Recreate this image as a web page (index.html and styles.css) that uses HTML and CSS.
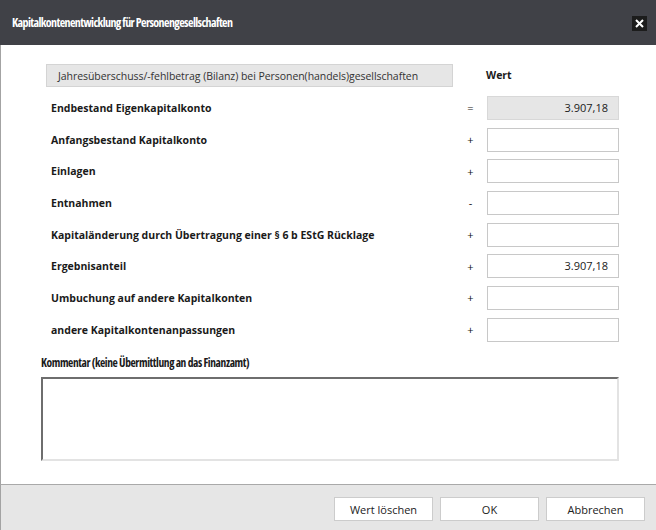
FILE: index.html
```html
<!DOCTYPE html>
<html lang="de">
<head>
<meta charset="utf-8">
<title>Kapitalkontenentwicklung</title>
<link rel="stylesheet" href="styles.css">
</head>
<body>
<div class="dialog">
  <div class="titlebar">
    <span class="title">Kapitalkontenentwicklung für Personengesellschaften</span>
    <span class="close"><svg width="9" height="9" viewBox="0 0 9 9"><path d="M1 1 L8 8 M8 1 L1 8" stroke="#fff" stroke-width="2" fill="none"/></svg></span>
  </div>
  <div class="content">
    <div class="grid">
      <div class="headbox">Jahresüberschuss/-fehlbetrag (Bilanz) bei Personen(handels)gesellschaften</div>
      <div class="sign head"></div>
      <div class="wert">Wert</div>

      <div class="label">Endbestand Eigenkapitalkonto</div>
      <div class="sign">=</div>
      <div class="cell"><div class="input readonly">3.907,18</div></div>

      <div class="label">Anfangsbestand Kapitalkonto</div>
      <div class="sign">+</div>
      <div class="cell"><div class="input"></div></div>

      <div class="label">Einlagen</div>
      <div class="sign">+</div>
      <div class="cell"><div class="input"></div></div>

      <div class="label">Entnahmen</div>
      <div class="sign">-</div>
      <div class="cell"><div class="input"></div></div>

      <div class="label">Kapitaländerung durch Übertragung einer § 6 b EStG Rücklage</div>
      <div class="sign">+</div>
      <div class="cell"><div class="input"></div></div>

      <div class="label">Ergebnisanteil</div>
      <div class="sign">+</div>
      <div class="cell"><div class="input">3.907,18</div></div>

      <div class="label">Umbuchung auf andere Kapitalkonten</div>
      <div class="sign">+</div>
      <div class="cell"><div class="input"></div></div>

      <div class="label">andere Kapitalkontenanpassungen</div>
      <div class="sign">+</div>
      <div class="cell"><div class="input"></div></div>
    </div>
    <div class="comment-label">Kommentar (keine Übermittlung an das Finanzamt)</div>
    <div class="textarea"></div>
  </div>
  <div class="footer">
    <div class="btn">Wert löschen</div>
    <div class="btn">OK</div>
    <div class="btn">Abbrechen</div>
  </div>
</div>
</body>
</html>
```
FILE: styles.css
```css
html, body {
  margin: 0;
  padding: 0;
  background: #ffffff;
}
body {
  font-family: "Open Sans", "Noto Sans", sans-serif;
  font-size: 10.5px;
  color: #1a1a1a;
}
.dialog {
  width: 656px;
  height: 530px;
  display: flex;
  flex-direction: column;
  overflow: hidden;
}
.titlebar {
  height: 45px;
  flex: none;
  background: #404147;
  display: flex;
  align-items: center;
  justify-content: space-between;
  padding: 0 9px 0 12px;
  box-sizing: border-box;
}
.title {
  color: #ffffff;
  font-family: "Open Sans", sans-serif;
  font-weight: 700;
  font-stretch: 75%;
  font-size: 12px;
  letter-spacing: -0.6px;
}
.close {
  width: 15px;
  height: 15px;
  background: #1c1c1c;
  display: flex;
  align-items: center;
  justify-content: center;
  margin-top: 2px;
}
.content {
  flex: 1;
  border-left: 1px solid #a3a3a3;
  padding: 19px 0 0 40px;
  display: flex;
  flex-direction: column;
}
.grid {
  margin-left: 5px;
  display: grid;
  grid-template-columns: 407px 34px 132px;
  grid-template-rows: 28px repeat(8, 31.7px);
  align-items: center;
}
.headbox {
  align-self: start;
  height: 23px;
  box-sizing: border-box;
  background: #e6e6e6;
  border: 1px solid #d4d4d4;
  padding-left: 11px;
  display: flex;
  align-items: center;
  color: #333;
  letter-spacing: -0.05px;
}
.sign.head {
  align-self: start;
}
.wert {
  align-self: start;
  height: 23px;
  line-height: 23px;
  font-weight: bold;
  margin-left: -1px;
}
.label {
  font-weight: bold;
  padding-left: 5px;
  white-space: nowrap;
}
.sign {
  text-align: center;
  padding-left: 1px;
  font-size: 11px;
  color: #111;
}
.cell {
  display: flex;
  align-items: center;
}
.input {
  width: 132px;
  height: 24px;
  box-sizing: border-box;
  border: 1px solid #c8c8c8;
  background: #fff;
  text-align: right;
  padding-right: 10px;
  line-height: 22px;
  font-size: 11px;
}
.input.readonly {
  background: #e6e6e6;
  border-color: #d8d8d8;
}
.comment-label {
  font-family: "Open Sans", sans-serif;
  font-weight: 700;
  font-stretch: 75%;
  font-size: 11.5px;
  letter-spacing: -0.4px;
  margin-top: 8px;
  height: 18px;
  line-height: 18px;
}
.textarea {
  margin-top: 5px;
  width: 578px;
  height: 84px;
  box-sizing: border-box;
  border-top: 2px solid #6e6e6e;
  border-left: 2px solid #6e6e6e;
  border-right: 2px solid #e3e3e3;
  border-bottom: 2px solid #e3e3e3;
}
.footer {
  height: 46px;
  flex: none;
  box-sizing: border-box;
  background: #e6e6e6;
  border-top: 1px solid #a9a9a9;
  border-left: 1px solid #a3a3a3;
  display: flex;
  justify-content: flex-end;
  align-items: flex-start;
  gap: 7px;
  padding: 12px 11px 0 0;
}
.btn {
  width: 99px;
  height: 24px;
  box-sizing: border-box;
  background: #fff;
  border: 1px solid #cccccc;
  display: flex;
  align-items: center;
  justify-content: center;
  color: #222;
  font-size: 11px;
}
```
